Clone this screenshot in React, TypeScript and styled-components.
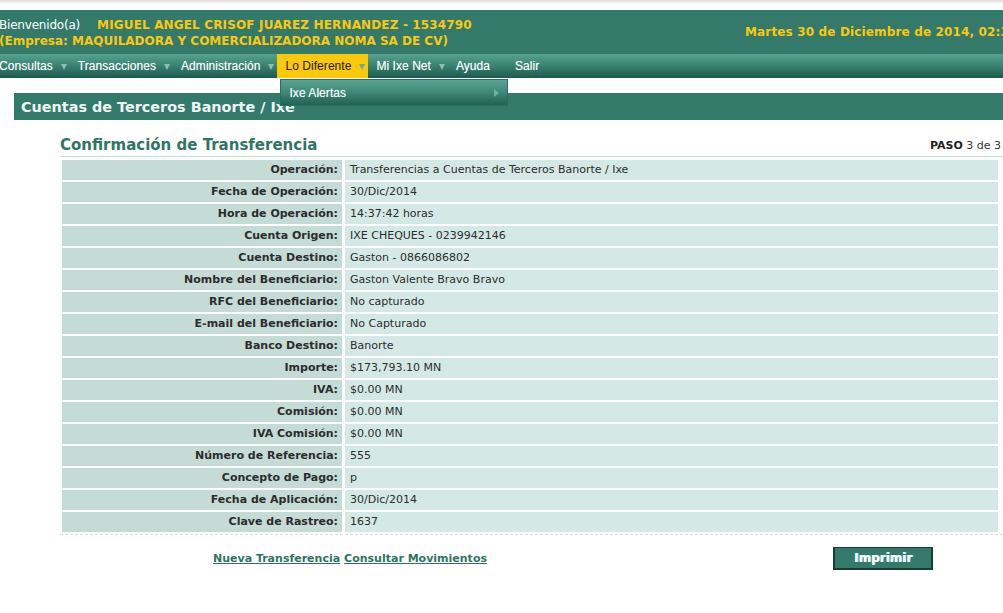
import React from "react";
import styled, { createGlobalStyle } from "styled-components";

const GlobalStyle = createGlobalStyle`
  html, body { margin: 0; padding: 0; background: #fff; overflow: hidden; }
  body { font-family: "DejaVu Sans", Verdana, sans-serif; }
`;

const Page = styled.div`
  width: 1003px;
  position: relative;
`;

const TopStrip = styled.div`
  height: 10px;
  background: linear-gradient(#dcdcdc 0px, #ececec 2px, #fff 4px, #fff 10px);
`;

const Header = styled.header`
  height: 44px;
  background: #347a6b;
  display: flex;
  align-items: center;
  justify-content: space-between;
  margin-left: -1px;
  white-space: nowrap;
`;

const Greeting = styled.div`
  display: flex;
  flex-direction: column;
  font-size: 12px;
  line-height: 16px;
  padding-top: 1px;
`;

const GreetLine = styled.div`
  display: flex;
  gap: 17px;
`;

const White = styled.span`
  color: #ffffff;
  letter-spacing: -0.2px;
`;

const Yellow = styled.span<{ $wide?: boolean }>`
  color: #fcc80c;
  font-weight: bold;
  letter-spacing: ${(p) => (p.$wide ? "0.15px" : "0")};
`;

const DateText = styled.div`
  color: #fcc80c;
  font-weight: bold;
  font-size: 12px;
  margin-right: -40px;
  width: 298px;
  letter-spacing: 0.15px;
`;

const MenuBar = styled.nav`
  height: 24px;
  background: linear-gradient(#55a190, #3c8575 45%, #2a6d5e 75%, #1d5c4d);
  display: flex;
  align-items: stretch;
  margin-left: -9px;
  position: relative;
  z-index: 2;
`;

const MenuItem = styled.div<{ $active?: boolean }>`
  position: relative;
  display: flex;
  align-items: center;
  gap: 8px;
  padding: 0 3px 0 8px;
  font-family: "Liberation Sans", Arial, sans-serif;
  font-size: 12px;
  letter-spacing: 0.05px;
  color: ${(p) => (p.$active ? "#1a1a1a" : "#ffffff")};
  background: ${(p) => (p.$active ? "#fbc80a" : "transparent")};
  text-shadow: ${(p) => (p.$active ? "none" : "0 0 1px rgba(255,255,255,0.4)")};
  white-space: nowrap;
`;

const Arrow = styled.span<{ $hidden?: boolean; $active?: boolean }>`
  width: 0;
  height: 0;
  border-left: 3.5px solid transparent;
  border-right: 3.5px solid transparent;
  border-top: 6px solid ${(p) => (p.$active ? "#6ea6a2" : "#8dbcb1")};
  margin-top: 2px;
  visibility: ${(p) => (p.$hidden ? "hidden" : "visible")};
`;

const Dropdown = styled.div`
  position: absolute;
  left: 3px;
  top: 25px;
  width: 228px;
  height: 27px;
  box-sizing: border-box;
  border: 1px solid #2b6e5f;
  background: linear-gradient(#58a492, #3f8877 50%, #2c6f60 80%, #226353);
  display: flex;
  align-items: center;
  justify-content: space-between;
  padding: 0 8px 0 8px;
`;

const DropText = styled.span`
  color: #ffffff;
  font-family: "Liberation Sans", Arial, sans-serif;
  font-size: 12px;
  text-shadow: 0 0 1px rgba(255,255,255,0.4);
`;

const RightArrow = styled.span`
  width: 0;
  height: 0;
  border-top: 4px solid transparent;
  border-bottom: 4px solid transparent;
  border-left: 5px solid #6cb4a2;
`;

const Spacer = styled.div`
  height: 15px;
`;

const TitleBar = styled.div`
  margin-left: 14px;
  height: 27px;
  background: #347a6b;
  display: flex;
  align-items: center;
  padding-left: 7px;
  color: #eef5f3;
  font-weight: bold;
  font-size: 14.4px;
  white-space: nowrap;
`;

const Content = styled.main`
  margin-left: 60px;
  width: 943px;
`;

const HeadRow = styled.div`
  display: flex;
  align-items: flex-end;
  justify-content: space-between;
  height: 37px;
  border-bottom: 1px solid #c6ddd8;
  box-sizing: border-box;
`;

const Heading = styled.h2`
  margin: 0 0 1px 0;
  color: #2f7565;
  font-size: 15px;
  font-weight: bold;
  line-height: 20px;
`;

const Paso = styled.div`
  font-size: 11px;
  color: #333;
  margin: 0 2px 4px 0;
  b { color: #222; }
`;

const Table = styled.div`
  display: grid;
  grid-template-columns: 280px 1fr;
  column-gap: 3px;
  row-gap: 2px;
  padding: 3px 5px 2px 2px;
  box-sizing: border-box;
  border-bottom: 1px dashed #cfe2de;
  width: 943px;
`;

const Label = styled.div`
  background: #c5dbd6;
  height: 20px;
  line-height: 20px;
  text-align: right;
  padding-right: 4px;
  font-size: 11px;
  font-weight: bold;
  color: #2c2c2c;
  white-space: nowrap;
`;

const Value = styled.div`
  background: #d4e9e5;
  height: 20px;
  line-height: 20px;
  padding-left: 5px;
  font-size: 11px;
  color: #2c2c2c;
  white-space: nowrap;
`;

const Footer = styled.div`
  display: grid;
  grid-template-columns: 580px 1fr;
  align-items: center;
  margin-top: 12px;
`;

const Links = styled.div`
  display: flex;
  justify-content: center;
  gap: 4px;
`;

const Link = styled.a`
  color: #2f7565;
  font-size: 11px;
  font-weight: bold;
  text-decoration: underline;
  cursor: pointer;
`;

const Button = styled.button`
  justify-self: end;
  margin-right: 68px;
  width: 100px;
  height: 23px;
  background: #347a6b;
  border: 2px solid #163c33;
  border-width: 1px 2px 2px 2px;
  color: #fff;
  font-family: "DejaVu Sans", Verdana, sans-serif;
  font-weight: bold;
  font-size: 12px;
  padding: 0;
  text-shadow: 1px 0 0 #9fd9e0;
  position: relative;
  left: -2px;
`;

const rows: [string, string][] = [
  ["Operación:", "Transferencias a Cuentas de Terceros Banorte / Ixe"],
  ["Fecha de Operación:", "30/Dic/2014"],
  ["Hora de Operación:", "14:37:42 horas"],
  ["Cuenta Origen:", "IXE CHEQUES - 0239942146"],
  ["Cuenta Destino:", "Gaston - 0866086802"],
  ["Nombre del Beneficiario:", "Gaston Valente Bravo Bravo"],
  ["RFC del Beneficiario:", "No capturado"],
  ["E-mail del Beneficiario:", "No Capturado"],
  ["Banco Destino:", "Banorte"],
  ["Importe:", "$173,793.10 MN"],
  ["IVA:", "$0.00 MN"],
  ["Comisión:", "$0.00 MN"],
  ["IVA Comisión:", "$0.00 MN"],
  ["Número de Referencia:", "555"],
  ["Concepto de Pago:", "p"],
  ["Fecha de Aplicación:", "30/Dic/2014"],
  ["Clave de Rastreo:", "1637"],
];

const menu = [
  { label: "Consultas" },
  { label: "Transacciones" },
  { label: "Administración" },
  { label: "Lo Diferente", active: true },
  { label: "Mi Ixe Net" },
  { label: "Ayuda", noArrow: true },
  { label: "Salir", noArrow: true },
];

export default function App() {
  return (
    <Page>
      <GlobalStyle />
      <TopStrip />
      <Header>
        <Greeting>
          <GreetLine>
            <White>Bienvenido(a)</White>
            <Yellow $wide>MIGUEL ANGEL CRISOF JUAREZ HERNANDEZ - 1534790</Yellow>
          </GreetLine>
          <Yellow>(Empresa: MAQUILADORA Y COMERCIALIZADORA NOMA SA DE CV)</Yellow>
        </Greeting>
        <DateText>Martes 30 de Diciembre de 2014, 02:37</DateText>
      </Header>
      <MenuBar>
        {menu.map((m) => (
          <MenuItem key={m.label} $active={m.active}>
            {m.label}
            <Arrow $hidden={m.noArrow} $active={m.active} />
            {m.active && (
              <Dropdown>
                <DropText>Ixe Alertas</DropText>
                <RightArrow />
              </Dropdown>
            )}
          </MenuItem>
        ))}
      </MenuBar>
      <Spacer />
      <TitleBar>Cuentas de Terceros Banorte / Ixe</TitleBar>
      <Content>
        <HeadRow>
          <Heading>Confirmación de Transferencia</Heading>
          <Paso>
            <b>PASO</b> 3 de 3
          </Paso>
        </HeadRow>
        <Table>
          {rows.map(([l, v]) => (
            <React.Fragment key={l}>
              <Label>{l}</Label>
              <Value>{v}</Value>
            </React.Fragment>
          ))}
        </Table>
        <Footer>
          <Links>
            <Link>Nueva Transferencia</Link>
            <Link>Consultar Movimientos</Link>
          </Links>
          <Button>Imprimir</Button>
        </Footer>
      </Content>
    </Page>
  );
}
